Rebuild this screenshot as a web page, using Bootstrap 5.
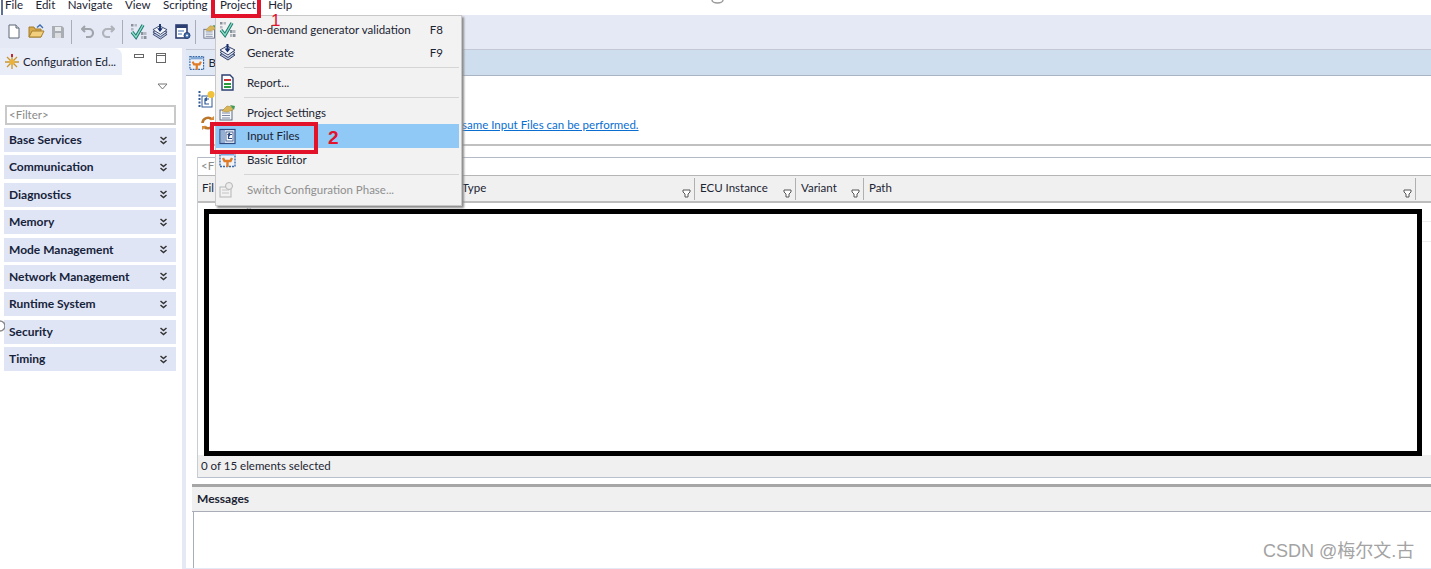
<!DOCTYPE html>
<html lang="en">
<head>
    <meta charset="UTF-8">
    <title>Configuration Editor</title>
    <link href="https://cdn.jsdelivr.net/npm/bootstrap@5.3.0/dist/css/bootstrap.min.css" rel="stylesheet">
    <style>
        body {
            width: 1431px;
            height: 569px;
            overflow: hidden;
            position: relative;
            background: #fff;
            font-family: Lato, "Liberation Sans", sans-serif;
            font-size: 11.5px;
            color: #1c2433;
        }
        .app-menubar { height: 15px; overflow: hidden; padding-left: 5px; gap: 12.5px; line-height: 12px; }
        .app-menubar span { margin-top: -1px; }
        .app-toolbar { height: 33px; background: #e5e9f6; padding-left: 8px; gap: 6px; }
        .tool-sep { width: 1px; height: 24px; background: #a9adb5; flex: none; }
        .nudge-r1 { margin-left: 1px; }
        .nudge-r2 { margin-left: 2px; }
        .nudge-r3 { margin-left: 3px; }
        .nudge-l1 { margin-left: -1px; }
        .nudge-l2 { margin-left: -2px; }
        .app-workspace { height: 521px; background: #e5e9f6; }
        .left-pane { width: 182px; background: #fff; flex: none; }
        .left-tabs { height: 27px; }
        .left-tab { width: 122px; background: #e9edf8; border-radius: 0 8px 0 0; padding-left: 4px; gap: 3px; white-space: nowrap; flex: none; }
        .pane-btn { margin-left: 12px; }
        .pane-menu { height: 30px; padding: 8px 14px 0 0; }
        .filter-box { margin: 0 6px 3px 5px; height: 20px; border: 2px solid #c9c9c9; color: #8a8a8a; line-height: 16px; padding-left: 2px; }
        .group-list { padding: 0 6px 0 4px; gap: 3.4px; }
        .group-head { height: 24px; background: #e0e5f5; font-weight: 700; font-size: 12px; padding: 0 8px 0 5px; color: #16233a; }
        .right-pane { margin-left: 4px; flex: 1; min-width: 0; }
        .right-pane > * { flex: none; }
        .editor-tabs { height: 27px; margin-top: 1px; background: #cfdeee; border-top: 1px solid #c3c8d4; border-bottom: 1px solid #a9b3c4; }
        .editor-tab { width: 30px; background: #dfe8f4; padding-left: 3px; }
        .editor-body { height: 407px; background: #fff; }
        .intro-block { height: 70px; padding: 14px 0 0 12px; border-bottom: 2px solid #c0c0c0; }
        .intro-row { margin: 7px 0 0 2px; }
        .link-line { color: #0a6ed1; text-decoration: underline; padding: 3px 0 0 246px; line-height: 14px; }
        .table-wrap { margin: 11px 0 0 11px; height: 321px; border-left: 1px solid #c8ccd4; }
        .table-filter { height: 18px; border-top: 1px solid #b4bac6; color: #8a8a8a; padding-left: 3px; line-height: 16px; }
        .table-header { height: 28px; background: #f0f0f0; border-top: 1px solid #b5b5b5; border-bottom: 2px solid #bdbdbd; }
        .head-cell { position: relative; height: 22px; flex: none; padding-left: 5px; line-height: 20px; border-right: 1px solid #b0b0b0; margin-top: 2px; }
        .head-cell svg { position: absolute; right: 3px; bottom: 2px; }
        .cell-file { width: 264px; padding-left: 4px; border-right: 0; }
        .cell-type { width: 233px; padding-left: 0; }
        .cell-ecu { width: 101px; }
        .cell-variant { width: 68px; }
        .cell-path { width: 552px; }
        .table-rows { height: 252px; padding: 6px 9px 0 6px; position: relative; }
        .file-set { position: absolute; left: 42px; top: 2px; color: #9a9a9a; font-size: 11px; }
        .row-line { position: absolute; right: 0; width: 9px; height: 1px; background: #eee; }
        .row-line-a { top: 18px; }
        .row-line-b { top: 38px; }
        .black-frame { height: 247px; border: 5px solid #000; background: #fff; position: relative; }
        .status-line { height: 23px; background: #f0f0f0; border-bottom: 1px solid #b9c0cf; padding-left: 3px; line-height: 22px; }
        .lower-block { height: 85px; background: #fff; padding-left: 6px; }
        .sash { height: 3px; background: #a6a6a6; margin-top: 1px; }
        .messages-head { height: 25px; background: #f0f0f0; border-bottom: 1px solid #a9adb8; font-weight: 700; font-size: 12px; padding-left: 5px; line-height: 24px; }
        .messages-body { height: 56px; margin-left: 1px; border-left: 1px solid #a9adb8; }
        .project-menu {
            position: absolute; left: 215px; top: 15px; width: 247px; height: 191px; padding-top: 2px;
            background: #f2f2f2; border: 1px solid #c8c8c8;
            box-shadow: 2px 2px 2px #8c8c8c; z-index: 5;
        }
        .menu-row { height: 23px; padding: 0 18px 0 3px; gap: 11px; }
        .menu-row .menu-label { flex: 1; }
        .menu-row.is-active { background: #90c8f6; height: 24px; width: 243px; padding-right: 14px; }
        .menu-row.is-disabled { color: #8f8f8f; }
        .menu-gap { height: 1px; background: #d5d5d5; margin: 3px 2px 3px 28px; }
        .menu-icon { width: 17px; flex: none; }
        .mark-box { position: absolute; border: 4px solid #e2122a; z-index: 6; }
        .mark-project { left: 211px; top: -4px; width: 50px; height: 22px; }
        .mark-input { left: 210px; top: 122px; width: 108px; height: 32px; }
        .mark-num { position: absolute; color: #e2122a; font-family: "Liberation Sans", sans-serif; z-index: 6; line-height: 1; }
        .num-one { left: 271px; top: 12px; font-size: 17px; }
        .num-two { left: 328px; top: 128px; font-size: 19px; font-weight: 700; }
        .csdn-mark { position: absolute; left: 1263px; top: 541px; color: #a3a3a3; font-family: "Liberation Sans", "Noto Sans CJK SC", sans-serif; font-size: 18px; line-height: 20px; z-index: 6; }
        .edge-bar { position: absolute; left: 1px; top: 0; z-index: 6; }
        .edge-ring { position: absolute; left: 0; top: 320px; z-index: 6; }
        .top-arc { position: absolute; left: 711px; top: 0; z-index: 6; }
    </style>
</head>
<body>
    <svg width="0" height="0" class="position-absolute">
        <symbol id="i-check" viewBox="0 0 17 17">
            <rect x="1" y="1" width="2.500" height="2.500" fill="#8b919b"/><rect x="4.500" y="1" width="2.500" height="2.500" fill="#b4b8c0"/><rect x="1" y="5" width="2.500" height="2.500" fill="#b4b8c0"/>
            <rect x="11" y="9" width="2.500" height="3" fill="#8b919b"/><rect x="14" y="9" width="2.500" height="3" fill="#b4b8c0"/><rect x="11" y="13" width="2.500" height="3" fill="#b4b8c0"/><rect x="14" y="13" width="2.500" height="3" fill="#8b919b"/>
            <path d="M2 9l4 5 7-12" fill="none" stroke="#1f7a72" stroke-width="3.400"/><path d="M2 9l4 5 7-12" fill="none" stroke="#8fe0c4" stroke-width="1.300"/>
        </symbol>
        <symbol id="i-gen" viewBox="0 0 17 17">
            <path d="M1 11l7-4 8 4-7 5z" fill="#b9c6e2" stroke="#38456b"/><path d="M1 8.500l7-4 8 4-7 5z" fill="#dfe6f5" stroke="#38456b"/><path d="M1 6l7-4 8 4-7 5z" fill="#f4f6fb" stroke="#38456b"/>
            <path d="M8.500 0v6" stroke="#16306e" stroke-width="2"/><path d="M5.500 4.500h6L8.500 8.500z" fill="#16306e"/>
        </symbol>
        <symbol id="i-filter" viewBox="0 0 9 9"><path d="M1 1h7v2l-2 2v3H3V5L1 3z" fill="#fff" stroke="#555" stroke-width="1"/></symbol>
        <symbol id="i-chev" viewBox="0 0 9 9"><path d="M1.500 1l3 2.600 3-2.600M1.500 5l3 2.600 3-2.600" fill="none" stroke="#333" stroke-width="1.500"/></symbol>
        <symbol id="i-edit" viewBox="0 0 17 17">
            <rect x="1" y="1.500" width="15" height="14" fill="#eef3fa" stroke="#3a69a8" stroke-width="1.400" stroke-dasharray="2 1"/><rect x="2" y="2" width="13" height="2.500" fill="#7fa6d6"/>
            <path d="M4 7l1.500 3h6L13 7M8.500 10v6" stroke="#e07b26" stroke-width="2.400" fill="none"/>
        </symbol>
        <symbol id="i-settings" viewBox="0 0 17 17">
            <rect x="1" y="6" width="12" height="10" fill="#f7f8fb" stroke="#5d6a85"/><path d="M3 9h8M3 11.500h8M3 14h8" stroke="#7b88a3"/>
            <path d="M3 7l5-5 5 1 1 3-6 2z" fill="#d9b65a" stroke="#a98a35" stroke-width="0.600"/><path d="M11 1l5 1-1 4z" fill="#3f9a58"/>
        </symbol>
    </svg>

    <svg class="edge-bar" width="3" height="15"><path d="M1 0v15" stroke="#2b3f73" stroke-width="1.500"/></svg>
    <svg class="edge-ring" width="5" height="12"><path d="M0 1a5 5 0 0 1 0 10" fill="none" stroke="#8a8a8a" stroke-width="1.500"/></svg>
    <svg class="top-arc" width="13" height="4"><path d="M1 0a5.500 3 0 0 0 11 0" fill="none" stroke="#9a9a9a" stroke-width="1.500"/></svg>

    <div class="app-menubar d-flex">
        <span>File</span><span>Edit</span><span>Navigate</span><span>View</span><span>Scripting</span><span>Project</span><span>Help</span>
    </div>

    <div class="app-toolbar d-flex align-items-center">
        <svg width="12" height="15" viewBox="0 0 12 15"><path d="M1 1h7l3 3v10H1z" fill="#fff" stroke="#5c6675"/><path d="M8 1v3h3" fill="#dfe3ea" stroke="#5c6675"/></svg>
        <svg class="nudge-r2" width="17" height="15" viewBox="0 0 17 15"><path d="M1 3h5l1 2h6v8H1z" fill="#d9a94a" stroke="#a37f2f"/><path d="M1 13l3-6h12l-3 6z" fill="#f1cf7c" stroke="#a37f2f"/><path d="M9 3.500l3-2.500 3 3" fill="none" stroke="#3f6fb0" stroke-width="1.400"/></svg>
        <svg width="14" height="14" viewBox="0 0 14 14"><path d="M1 1h10l2 2v10H1z" fill="#a9adb4"/><rect x="4" y="2" width="6" height="4" fill="#e9eaec"/><rect x="4" y="8" width="6" height="5" fill="#dcdde0"/></svg>
        <span class="tool-sep"></span>
        <svg class="nudge-r3" width="13" height="13" viewBox="0 0 13 13"><path d="M4 1L1 4l3 3M1 4h7a4 4 0 0 1 0 8H5" fill="none" stroke="#a0a4ab" stroke-width="2.200"/></svg>
        <svg class="nudge-r2" width="13" height="13" viewBox="0 0 13 13"><path d="M9 1l3 3-3 3M12 4H5a4 4 0 0 0 0 8h3" fill="none" stroke="#b0b4ba" stroke-width="2.200"/></svg>
        <span class="tool-sep nudge-r1"></span>
        <svg class="nudge-r1" width="17" height="17"><use href="#i-check"/></svg>
        <svg class="nudge-l1" width="16" height="16"><use href="#i-gen"/></svg>
        <svg class="nudge-r1" width="16" height="16" viewBox="0 0 16 16"><rect x="1" y="1" width="11" height="13" fill="#fff" stroke="#2b3f73" stroke-width="1.600"/><rect x="1" y="1" width="11" height="3" fill="#2b3f73"/><path d="M3 7h6M3 10h4" stroke="#3f6fb0"/><circle cx="12" cy="11.500" r="3" fill="#3f6fb0" stroke="#2b3f73"/><circle cx="12" cy="11.500" r="1" fill="#fff"/></svg>
        <span class="tool-sep nudge-l2"></span>
        <svg class="nudge-r1" width="15" height="15"><use href="#i-settings"/></svg>
    </div>

    <div class="app-workspace d-flex">
        <div class="left-pane d-flex flex-column">
            <div class="left-tabs d-flex">
                <div class="left-tab d-flex align-items-center">
                    <svg width="16" height="16" viewBox="0 0 16 16"><path d="M8 1v14M1 8h14M3 3l10 10M13 3L3 13" stroke="#c9962e" stroke-width="1.300"/><circle cx="8" cy="8" r="2.800" fill="#e8b23c"/><rect x="7" y="0" width="2" height="3" fill="#c0262b"/></svg>
                    <span>Configuration Ed...</span>
                </div>
                <svg class="pane-btn mt-1" width="10" height="8" viewBox="0 0 10 8"><rect x="0.500" y="2.500" width="9" height="3" fill="#fff" stroke="#666"/></svg>
                <svg class="pane-btn mt-1" width="10" height="12" viewBox="0 0 10 12"><rect x="0.500" y="1.500" width="9" height="9" fill="#fff" stroke="#666"/><path d="M0 3.500h10" stroke="#666"/></svg>
            </div>
            <div class="pane-menu d-flex justify-content-end">
                <svg width="11" height="7" viewBox="0 0 11 7"><path d="M1 1h9L5.500 6z" fill="#fff" stroke="#777"/></svg>
            </div>
            <div class="filter-box">&lt;Filter&gt;</div>
            <div class="group-list d-flex flex-column">
                <div class="group-head d-flex align-items-center justify-content-between">Base Services<svg width="9" height="9"><use href="#i-chev"/></svg></div>
                <div class="group-head d-flex align-items-center justify-content-between">Communication<svg width="9" height="9"><use href="#i-chev"/></svg></div>
                <div class="group-head d-flex align-items-center justify-content-between">Diagnostics<svg width="9" height="9"><use href="#i-chev"/></svg></div>
                <div class="group-head d-flex align-items-center justify-content-between">Memory<svg width="9" height="9"><use href="#i-chev"/></svg></div>
                <div class="group-head d-flex align-items-center justify-content-between">Mode Management<svg width="9" height="9"><use href="#i-chev"/></svg></div>
                <div class="group-head d-flex align-items-center justify-content-between">Network Management<svg width="9" height="9"><use href="#i-chev"/></svg></div>
                <div class="group-head d-flex align-items-center justify-content-between">Runtime System<svg width="9" height="9"><use href="#i-chev"/></svg></div>
                <div class="group-head d-flex align-items-center justify-content-between">Security<svg width="9" height="9"><use href="#i-chev"/></svg></div>
                <div class="group-head d-flex align-items-center justify-content-between">Timing<svg width="9" height="9"><use href="#i-chev"/></svg></div>
            </div>
        </div>

        <div class="right-pane d-flex flex-column">
            <div class="editor-tabs d-flex">
                <div class="editor-tab d-flex align-items-center">
                    <svg width="16" height="16"><use href="#i-edit"/></svg><span class="ms-1">B</span>
                </div>
            </div>
            <div class="editor-body">
                <div class="intro-block">
                    <svg class="d-block" width="18" height="18" viewBox="0 0 18 18"><path d="M1.500 1v16" stroke="#2f5a96" stroke-width="2" stroke-dasharray="2 1.500"/><rect x="4" y="6" width="10" height="11" fill="#fff" stroke="#2f5a96"/><path d="M11 9H7v5h4M9 7.500L7 9l2 1.500" fill="none" stroke="#2f5a96" stroke-width="1.200"/><circle cx="13" cy="4.500" r="3.500" fill="#f0c23c"/></svg>
                    <div class="intro-row d-flex">
                        <svg width="16" height="16" viewBox="0 0 16 16"><path d="M2.500 8a5.500 5.500 0 0 1 9.500-3.500M13.500 8A5.500 5.500 0 0 1 4 11.500" fill="none" stroke="#b9752a" stroke-width="2.600"/><path d="M9 5h5V1zM7 11H2v4z" fill="#d58d3a"/></svg>
                        <div class="link-line">same Input Files can be performed.</div>
                    </div>
                </div>
                <div class="table-wrap">
                    <div class="table-filter">&lt;Fi</div>
                    <div class="table-header d-flex">
                        <div class="head-cell cell-file">Fil</div>
                        <div class="head-cell cell-type">Type<svg width="9" height="9"><use href="#i-filter"/></svg></div>
                        <div class="head-cell cell-ecu">ECU Instance<svg width="9" height="9"><use href="#i-filter"/></svg></div>
                        <div class="head-cell cell-variant">Variant<svg width="9" height="9"><use href="#i-filter"/></svg></div>
                        <div class="head-cell cell-path">Path<svg width="9" height="9"><use href="#i-filter"/></svg></div>
                    </div>
                    <div class="table-rows">
                        <span class="file-set">File Set</span>
                        <span class="row-line row-line-a"></span>
                        <span class="row-line row-line-b"></span>
                        <div class="black-frame"></div>
                    </div>
                    <div class="status-line">0 of 15 elements selected</div>
                </div>
            </div>
            <div class="lower-block">
                <div class="sash"></div>
                <div class="messages-head">Messages</div>
                <div class="messages-body"></div>
            </div>
        </div>
    </div>

    <div class="project-menu">
        <div class="menu-row d-flex align-items-center"><svg class="menu-icon" width="17" height="17"><use href="#i-check"/></svg><span class="menu-label">On-demand generator validation</span><span>F8</span></div>
        <div class="menu-row d-flex align-items-center"><svg class="menu-icon" width="17" height="17"><use href="#i-gen"/></svg><span class="menu-label">Generate</span><span>F9</span></div>
        <div class="menu-gap"></div>
        <div class="menu-row d-flex align-items-center"><svg class="menu-icon" width="17" height="17" viewBox="0 0 17 17"><path d="M3 1h8l3 3v12H3z" fill="#fff" stroke="#2b3f73" stroke-width="1.400"/><path d="M5 6h7" stroke="#c33" stroke-width="2"/><path d="M5 10h7M5 13h7" stroke="#2a9a3f" stroke-width="2"/></svg><span class="menu-label">Report...</span></div>
        <div class="menu-gap"></div>
        <div class="menu-row d-flex align-items-center"><svg class="menu-icon" width="17" height="17"><use href="#i-settings"/></svg><span class="menu-label">Project Settings</span></div>
        <div class="menu-row is-active d-flex align-items-center"><svg class="menu-icon" width="17" height="17" viewBox="0 0 17 17"><rect x="1" y="1.500" width="15" height="14" fill="#e4edf8" stroke="#2f4a80" stroke-width="1.200"/><path d="M3 2v13M5 2v13" stroke="#5f86bd" stroke-width="1.200"/><rect x="7" y="4" width="7" height="9" fill="#fff" stroke="#2f4a80" stroke-width="0.800"/><path d="M13 6.500H9.500v4H13M11 5l-2 1.500L11 8" fill="none" stroke="#2f4a80" stroke-width="1.200"/></svg><span class="menu-label">Input Files</span></div>
        <div class="menu-row d-flex align-items-center"><svg class="menu-icon" width="17" height="17"><use href="#i-edit"/></svg><span class="menu-label">Basic Editor</span></div>
        <div class="menu-gap"></div>
        <div class="menu-row is-disabled d-flex align-items-center"><svg class="menu-icon" width="17" height="17" viewBox="0 0 17 17"><rect x="1" y="6" width="11" height="10" fill="#f2f2f2" stroke="#b5b5b5"/><path d="M3 9h7M3 12h7" stroke="#c4c4c4"/><circle cx="10" cy="5" r="3.500" fill="#ececec" stroke="#b5b5b5"/></svg><span class="menu-label">Switch Configuration Phase...</span></div>
    </div>

    <div class="mark-box mark-project"></div>
    <span class="mark-num num-one">1</span>
    <div class="mark-box mark-input"></div>
    <span class="mark-num num-two">2</span>
    <div class="csdn-mark">CSDN @梅尔文.古</div>

    <script src="https://cdn.jsdelivr.net/npm/bootstrap@5.3.0/dist/js/bootstrap.bundle.min.js"></script>
</body>
</html>
